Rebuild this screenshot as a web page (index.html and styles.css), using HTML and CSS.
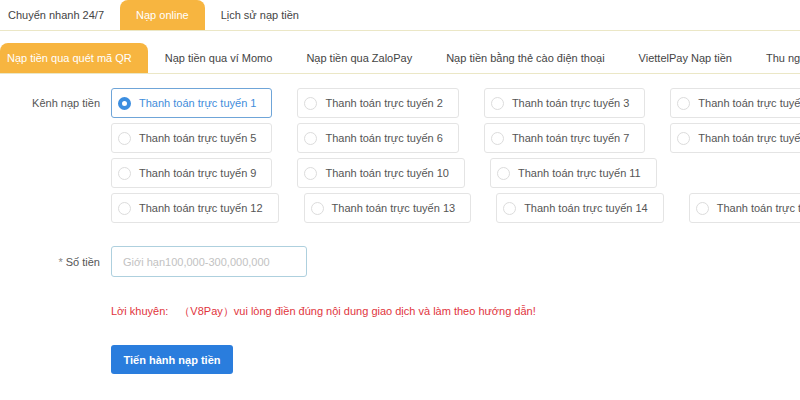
FILE: index.html
```html
<!DOCTYPE html>
<html lang="vi">
<head>
<meta charset="utf-8">
<link rel="stylesheet" href="styles.css">
</head>
<body>
<div class="page">
  <nav class="tabs tabs-main">
    <span class="tab first">Chuyển nhanh 24/7</span>
    <span class="tab active">Nạp online</span>
    <span class="tab">Lịch sử nạp tiền</span>
  </nav>
  <nav class="tabs tabs-sub">
    <span class="tab first active">Nạp tiền qua quét mã QR</span>
    <span class="tab">Nạp tiền qua ví Momo</span>
    <span class="tab">Nạp tiền qua ZaloPay</span>
    <span class="tab">Nạp tiền bằng thẻ cào điện thoại</span>
    <span class="tab">ViettelPay Nạp tiền</span>
    <span class="tab">Thu ngân</span>
  </nav>

  <div class="form-row channels-row">
    <div class="label">Kênh nạp tiền</div>
    <div class="channels">
      <div class="ch-row">
        <label class="opt checked"><span class="radio"></span>Thanh toán trực tuyến 1</label>
        <label class="opt"><span class="radio"></span>Thanh toán trực tuyến 2</label>
        <label class="opt"><span class="radio"></span>Thanh toán trực tuyến 3</label>
        <label class="opt"><span class="radio"></span>Thanh toán trực tuyến 4</label>
      </div>
      <div class="ch-row">
        <label class="opt"><span class="radio"></span>Thanh toán trực tuyến 5</label>
        <label class="opt"><span class="radio"></span>Thanh toán trực tuyến 6</label>
        <label class="opt"><span class="radio"></span>Thanh toán trực tuyến 7</label>
        <label class="opt"><span class="radio"></span>Thanh toán trực tuyến 8</label>
      </div>
      <div class="ch-row">
        <label class="opt"><span class="radio"></span>Thanh toán trực tuyến 9</label>
        <label class="opt"><span class="radio"></span>Thanh toán trực tuyến 10</label>
        <label class="opt"><span class="radio"></span>Thanh toán trực tuyến 11</label>
      </div>
      <div class="ch-row">
        <label class="opt"><span class="radio"></span>Thanh toán trực tuyến 12</label>
        <label class="opt"><span class="radio"></span>Thanh toán trực tuyến 13</label>
        <label class="opt"><span class="radio"></span>Thanh toán trực tuyến 14</label>
        <label class="opt"><span class="radio"></span>Thanh toán trực tuyến 15</label>
      </div>
    </div>
  </div>

  <div class="form-row amount-row">
    <div class="label"><span class="req">*</span> Số tiền</div>
    <input class="amount" type="text" placeholder="Giới hạn100,000-300,000,000">
  </div>

  <div class="form-row tip-row">
    <div class="label"></div>
    <p class="tip">Lời khuyên:　（V8Pay）vui lòng điền đúng nội dung giao dịch và làm theo hướng dẫn!</p>
  </div>

  <div class="form-row btn-row">
    <div class="label"></div>
    <button class="submit" type="button">Tiến hành nạp tiền</button>
  </div>
</div>
</body>
</html>
```

FILE: styles.css
```css
* { box-sizing: border-box; }
html, body {
  margin: 0;
  padding: 0;
  background: #fff;
  overflow: hidden;
}
body {
  font-family: "Liberation Sans", Arial, "Noto Sans", sans-serif;
  font-size: 11px;
  color: #555;
}
.page {
  width: 800px;
  height: 400px;
  overflow: hidden;
}
.tabs {
  display: flex;
  white-space: nowrap;
  border-bottom: 1px solid #ebe7c6;
}
.tab {
  display: flex;
  align-items: center;
  padding: 0 16px;
  height: 30px;
  color: #444;
}
.tab.active {
  background: #f7b540;
  color: #fff;
  border-radius: 8px 8px 0 0;
}
.tabs-main .tab.first { margin-left: -8px; }
.tabs-sub {
  padding-top: 12px;
}
.tabs-sub .tab { padding: 0 17px; }
.tabs-sub .tab.first { padding-left: 7px; padding-right: 16px; }

.form-row {
  display: flex;
  align-items: flex-start;
}
.label {
  width: 100px;
  flex: none;
  margin-right: 11px;
  text-align: right;
  color: #555;
  white-space: nowrap;
}
.channels-row { margin-top: 14px; }
.channels-row .label { line-height: 30px; }
.channels {
  display: flex;
  flex-direction: column;
  gap: 5px;
}
.ch-row {
  display: flex;
  gap: 25px;
  white-space: nowrap;
}
.opt {
  display: flex;
  align-items: center;
  height: 30px;
  padding: 0 15px 0 6px;
  border: 1px solid #e4e4e4;
  border-radius: 3px;
  color: #555;
  flex: none;
}
.radio {
  width: 13px;
  height: 13px;
  border: 1px solid #dcdcdc;
  border-radius: 50%;
  margin-right: 8px;
  flex: none;
  background: #fff;
}
.opt.checked {
  border-color: #6fa5d8;
  color: #3f8ddb;
}
.opt.checked .radio {
  border: 4px solid #3c8ee0;
  background: #fff;
}

.amount-row {
  margin-top: 23px;
  align-items: center;
}
.req { color: #888; }
.amount {
  width: 196px;
  height: 31px;
  border: 1px solid #aed0de;
  border-radius: 3px;
  padding: 0 11px;
  font-family: inherit;
  font-size: 11px;
  color: #555;
  outline: none;
}
.amount::placeholder { color: #c2c2c2; }

.tip-row { margin-top: 27px; }
.tip {
  margin: 0;
  color: #e1353d;
  line-height: 14px;
  white-space: nowrap;
}
.btn-row { margin-top: 27px; }
.submit {
  width: 122px;
  height: 29px;
  border: none;
  border-radius: 3px;
  background: #2a7ddd;
  color: #fff;
  font-family: inherit;
  font-size: 11px;
  font-weight: bold;
  padding: 0;
}
```
